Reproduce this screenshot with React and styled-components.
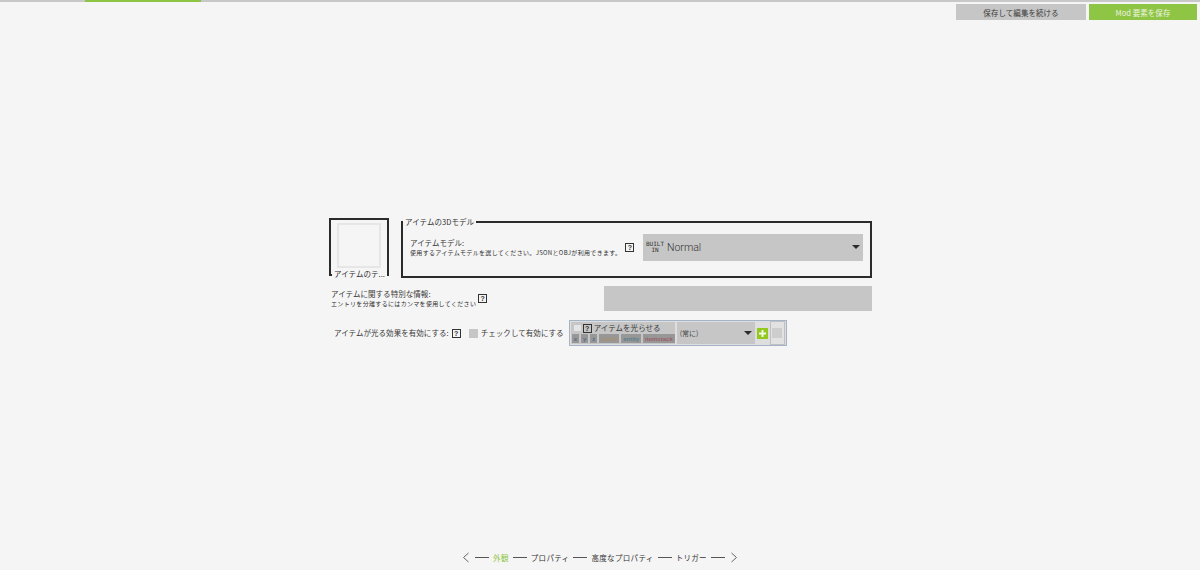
import React from 'react';
import styled, { createGlobalStyle } from 'styled-components';

const GlobalStyle = createGlobalStyle`
  html, body {
    margin: 0;
    padding: 0;
    height: 100%;
    background: #f5f5f5;
  }
  #root {
    height: 100%;
  }
  * {
    box-sizing: border-box;
  }
`;

const Page = styled.div`
  height: 570px;
  display: flex;
  flex-direction: column;
  background: #f5f5f5;
  color: #333;
  font-family: "Noto Sans CJK JP", "Noto Sans", sans-serif;
  overflow: hidden;
`;

const ProgressBar = styled.div`
  height: 2px;
  flex: none;
  display: flex;
  background: #c8c8c8;
`;

const ProgressFill = styled.div`
  width: 116px;
  margin-left: 85px;
  background: #8fc544;
`;

const TopActions = styled.div`
  display: flex;
  justify-content: flex-end;
  gap: 3px;
  padding: 2px 3px 0 0;
`;

const ActionButton = styled.div`
  width: ${(p) => p.$width}px;
  height: 16px;
  display: flex;
  align-items: center;
  justify-content: center;
  font-size: 7.5px;
  letter-spacing: 0.05px;
  background: ${(p) => (p.$primary ? '#8fc544' : '#c6c6c6')};
  color: ${(p) => (p.$primary ? '#eef4e2' : '#3a3a3a')};
`;

const Content = styled.div`
  flex: 1;
  display: flex;
  flex-direction: column;
  width: 543px;
  margin-left: 329px;
  padding-top: 198px;
`;

const TopRow = styled.div`
  display: flex;
  align-items: flex-start;
  gap: 12px;
`;

const Group = styled.fieldset`
  margin: 0;
  min-width: 0;
  border: 2px solid #2b2b2b;
  padding: 0;
`;

const GroupLegend = styled.legend`
  padding: 0 2px;
  margin-left: -7px;
  font-size: 7.5px;
  line-height: 10px;
  letter-spacing: 0.05px;
  color: #333;
  white-space: nowrap;
`;

const TextureGroup = styled(Group)`
  width: 60px;
  height: 58px;
  display: flex;
  flex-direction: column;
  position: relative;
  padding: 3px 6px 0;
`;

const TextureLegend = styled(GroupLegend)`
  position: absolute;
  left: 1px;
  bottom: -5px;
  margin: 0;
  background: #f5f5f5;
`;

const TextureSlot = styled.div`
  width: 44px;
  height: 45px;
  border: 2px solid #e6e6e6;
`;

const ModelGroup = styled(Group)`
  width: 471px;
  height: 61px;
  margin-top: -1px;
  display: flex;
  align-items: center;
  justify-content: space-between;
  padding: 0 7px 9px 7px;
`;

const LabelRow = styled.div`
  display: flex;
  align-items: center;
  gap: ${(p) => p.$gap || 4}px;
`;

const LabelText = styled.div`
  display: flex;
  flex-direction: column;
`;

const MainLabel = styled.span`
  font-size: 7.5px;
  line-height: 10px;
  letter-spacing: 0.05px;
  color: #383838;
  white-space: nowrap;
`;

const SubLabel = styled.span`
  font-size: 6px;
  line-height: 9px;
  letter-spacing: 0.33px;
  color: #2e2e2e;
  white-space: nowrap;
`;

const Help = styled.span`
  width: 9px;
  height: 9px;
  flex: none;
  display: inline-flex;
  align-items: center;
  justify-content: center;
  border: 1px solid #333;
  font-family: "Liberation Sans", sans-serif;
  font-size: 7px;
  font-weight: 700;
  line-height: 1;
  color: #333;
`;

const ModelSelect = styled.div`
  width: 220px;
  height: 27px;
  display: flex;
  align-items: center;
  padding: 0 3px 0 3px;
  background: #c6c6c6;
`;

const BuiltIn = styled.span`
  width: 18px;
  text-align: center;
  font-family: "DejaVu Sans Mono", monospace;
  font-size: 6px;
  line-height: 6px;
  color: #333;
  margin-right: 3px;
`;

const SelectValue = styled.span`
  flex: 1;
  font-family: Roboto, sans-serif;
  font-size: 10.5px;
  font-weight: 300;
  color: #333;
`;

const Caret = styled.span`
  width: 0;
  height: 0;
  border-left: 4px solid transparent;
  border-right: 4px solid transparent;
  border-top: 4px solid #2b2b2b;
`;

const InfoRow = styled.div`
  display: flex;
  align-items: center;
  justify-content: space-between;
  margin-top: 8px;
  padding-left: 2px;
`;

const InfoInput = styled.div`
  width: 268px;
  height: 25px;
  background: #c6c6c6;
`;

const GlowRow = styled.div`
  display: flex;
  align-items: center;
  margin-top: 9px;
  padding-left: 5px;
`;

const GlowLabel = styled(LabelRow)`
  margin-right: 8px;
`;

const CheckBox = styled.span`
  width: 9px;
  height: 9px;
  background: #c6c6c6;
  margin-right: 3px;
`;

const CheckLabel = styled(MainLabel)`
  margin-right: 5px;
`;

const ProcedureBox = styled.div`
  width: 218px;
  height: 26px;
  display: flex;
  align-items: stretch;
  padding: 1px;
  background: #dedede;
  border: 1px solid #a3b4c8;
`;

const ProcedureInfo = styled.div`
  width: 104px;
  padding: 1px 0 0 1px;
  background: #c6c6c6;
  display: flex;
  flex-direction: column;
  gap: 1px;
`;

const ProcedureTitle = styled.div`
  display: flex;
  align-items: center;
  gap: 2px;
  padding-left: 2px;
  height: 10px;
`;

const Monitor = styled.span`
  width: 7px;
  height: 6px;
  background: #e4e4e4;
`;

const Chips = styled.div`
  display: flex;
  gap: 2px;
`;

const Chip = styled.span`
  height: 9px;
  padding: 0 2px;
  min-width: 7px;
  display: inline-flex;
  align-items: center;
  justify-content: center;
  font-family: "Liberation Sans", sans-serif;
  font-size: 6px;
  font-weight: 700;
  background: #979797;
  color: ${(p) => p.$color};
`;

const ProcedureSelect = styled.div`
  width: 78px;
  margin-left: 2px;
  display: flex;
  align-items: center;
  justify-content: space-between;
  padding: 0 3px 0 3px;
  background: #c6c6c6;
  font-size: 7px;
  color: #444;
`;

const AddButton = styled.svg`
  display: block;
  width: 11px;
  height: 11px;
  margin: auto 2px;
  flex: none;
`;

const RemoveSlot = styled.div`
  width: 15px;
  margin: -1px 0;
  display: flex;
  align-items: center;
  justify-content: center;
  border: 1px solid #c0c0c0;
  background: #e2e2e2;
`;

const RemoveIcon = styled.span`
  width: 10px;
  height: 10px;
  background: #cdcdcd;
`;

const Steps = styled.nav`
  margin-top: auto;
  height: 25px;
  flex: none;
  display: flex;
  align-items: center;
  justify-content: center;
  gap: 4px;
  padding-bottom: 1px;
  font-size: 7.5px;
  letter-spacing: 0.33px;
`;

const Step = styled.span`
  color: ${(p) => (p.$active ? '#8fc544' : '#333')};
  white-space: nowrap;
`;

const StepLine = styled.span`
  width: 14px;
  height: 1px;
  background: #555;
`;

const Chevron = styled.svg`
  width: 8px;
  height: 11px;
  margin: 0 1px;
  fill: none;
  stroke: #666;
  stroke-width: 1;
`;

const chips = [
  { label: 'x', color: '#5a6c86' },
  { label: 'y', color: '#5a6c86' },
  { label: 'z', color: '#5a6c86' },
  { label: 'world', color: '#a89272' },
  { label: 'entity', color: '#5d7f8a' },
  { label: 'itemstack', color: '#9a5f6a' },
];

const steps = ['外観', 'プロパティ', '高度なプロパティ', 'トリガー'];

const App = () => {
  return (
    <Page>
      <GlobalStyle />
      <ProgressBar>
        <ProgressFill />
      </ProgressBar>
      <TopActions>
        <ActionButton $width={130}>保存して編集を続ける</ActionButton>
        <ActionButton $width={108} $primary>Mod 要素を保存</ActionButton>
      </TopActions>

      <Content>
        <TopRow>
          <TextureGroup as="div">
            <TextureSlot />
            <TextureLegend as="span">アイテムのテ...</TextureLegend>
          </TextureGroup>
          <ModelGroup>
            <GroupLegend>アイテムの3Dモデル</GroupLegend>
            <LabelRow>
              <LabelText>
                <MainLabel>アイテムモデル:</MainLabel>
                <SubLabel>使用するアイテムモデルを選してください。JSONとOBJが利用できます。</SubLabel>
              </LabelText>
              <Help>?</Help>
            </LabelRow>
            <ModelSelect>
              <BuiltIn>BUILT IN</BuiltIn>
              <SelectValue>Normal</SelectValue>
              <Caret />
            </ModelSelect>
          </ModelGroup>
        </TopRow>

        <InfoRow>
          <LabelRow $gap={2}>
            <LabelText>
              <MainLabel>アイテムに関する特別な情報:</MainLabel>
              <SubLabel>エントリを分離するにはカンマを使用してください</SubLabel>
            </LabelText>
            <Help>?</Help>
          </LabelRow>
          <InfoInput />
        </InfoRow>

        <GlowRow>
          <GlowLabel $gap={3}>
            <MainLabel>アイテムが光る効果を有効にする:</MainLabel>
            <Help>?</Help>
          </GlowLabel>
          <CheckBox />
          <CheckLabel>チェックして有効にする</CheckLabel>
          <ProcedureBox>
            <ProcedureInfo>
              <ProcedureTitle>
                <Monitor />
                <Help>?</Help>
                <MainLabel>アイテムを光らせる</MainLabel>
              </ProcedureTitle>
              <Chips>
                {chips.map((chip) => (
                  <Chip key={chip.label} $color={chip.color}>{chip.label}</Chip>
                ))}
              </Chips>
            </ProcedureInfo>
            <ProcedureSelect>
              (常に)
              <Caret />
            </ProcedureSelect>
            <AddButton viewBox="0 0 11 11">
              <rect width="11" height="11" fill="#93c91f" />
              <path d="M5.5 2v7M2 5.5h7" stroke="#f4f8e8" strokeWidth="2" />
            </AddButton>
            <RemoveSlot>
              <RemoveIcon />
            </RemoveSlot>
          </ProcedureBox>
        </GlowRow>
      </Content>

      <Steps>
        <Chevron viewBox="0 0 8 11">
          <path d="M6.5 1 1.5 5.5 6.5 10" />
        </Chevron>
        <StepLine />
        {steps.map((step, index) => (
          <React.Fragment key={step}>
            <Step $active={index === 0}>{step}</Step>
            <StepLine />
          </React.Fragment>
        ))}
        <Chevron viewBox="0 0 8 11">
          <path d="M1.5 1 6.5 5.5 1.5 10" />
        </Chevron>
      </Steps>
    </Page>
  );
};

export default App;
